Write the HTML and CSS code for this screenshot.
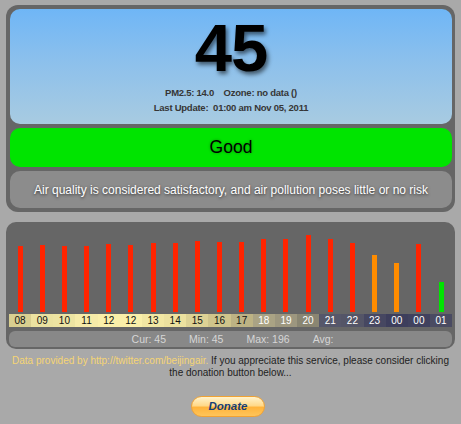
FILE: index.html
```html
<!DOCTYPE html>
<html>
<head>
<meta charset="utf-8">
<link rel="stylesheet" href="styles.css">
</head>
<body>
<div class="page">
  <div class="panel top">
    <div class="sky">
      <div class="aqi">45</div>
      <div class="info">PM2.5: 14.0&nbsp;&nbsp;&nbsp;&nbsp;Ozone: no data ()</div>
      <div class="info">Last Update:&nbsp; 01:00 am Nov 05, 2011</div>
    </div>
    <div class="level">Good</div>
    <div class="desc">Air quality is considered satisfactory, and air pollution poses little or no risk</div>
  </div>

  <div class="panel chart">
    <div class="bars">
      <div class="col"><span class="bar red" style="height:66px"></span></div>
      <div class="col"><span class="bar red" style="height:67px"></span></div>
      <div class="col"><span class="bar red" style="height:66px"></span></div>
      <div class="col"><span class="bar red" style="height:66px"></span></div>
      <div class="col"><span class="bar red" style="height:68px"></span></div>
      <div class="col"><span class="bar red" style="height:67px"></span></div>
      <div class="col"><span class="bar red" style="height:69px"></span></div>
      <div class="col"><span class="bar red" style="height:69px"></span></div>
      <div class="col"><span class="bar red" style="height:71px"></span></div>
      <div class="col"><span class="bar red" style="height:70px"></span></div>
      <div class="col"><span class="bar red" style="height:70px"></span></div>
      <div class="col"><span class="bar red" style="height:73px"></span></div>
      <div class="col"><span class="bar red" style="height:73px"></span></div>
      <div class="col"><span class="bar red" style="height:77px"></span></div>
      <div class="col"><span class="bar red" style="height:73px"></span></div>
      <div class="col"><span class="bar red" style="height:69px"></span></div>
      <div class="col"><span class="bar orange" style="height:57px"></span></div>
      <div class="col"><span class="bar orange" style="height:49px"></span></div>
      <div class="col"><span class="bar red" style="height:68px"></span></div>
      <div class="col"><span class="bar green" style="height:30px"></span></div>
    </div>
    <div class="labels">
      <span class="lab" style="background:#d9cf90">08</span>
      <span class="lab" style="background:#ebe2a0">09</span>
      <span class="lab" style="background:#ede4a2">10</span>
      <span class="lab" style="background:#f6eba8">11</span>
      <span class="lab" style="background:#faefa9">12</span>
      <span class="lab" style="background:#faefa9">12</span>
      <span class="lab" style="background:#f2e7a3">13</span>
      <span class="lab" style="background:#ece19f">14</span>
      <span class="lab" style="background:#ddd295">15</span>
      <span class="lab" style="background:#cfc48b">16</span>
      <span class="lab" style="background:#bdb384">17</span>
      <span class="lab light" style="background:#aaa384">18</span>
      <span class="lab light" style="background:#9d977f">19</span>
      <span class="lab light" style="background:#8a8672">20</span>
      <span class="lab light" style="background:#56576a">21</span>
      <span class="lab light" style="background:#545567">22</span>
      <span class="lab light" style="background:#464761">23</span>
      <span class="lab light" style="background:#3d3e5c">00</span>
      <span class="lab light" style="background:#40415e">00</span>
      <span class="lab light" style="background:#4a4b62">01</span>
    </div>
    <div class="stats">
      <span>Cur: 45</span>
      <span>Min: 45</span>
      <span>Max: 196</span>
      <span>Avg: </span>
    </div>
  </div>

  <div class="note">
    <div class="line"><span class="src">Data provided by http://twitter.com/beijingair.</span> If you appreciate this service, please consider clicking</div>
    <div class="line">the donation button below...</div>
  </div>

  <div class="donate-wrap">
    <span class="donate">Donate</span>
  </div>
</div>
</body>
</html>
```
FILE: styles.css
```css
html, body {
  margin: 0;
  padding: 0;
  background: #a9a9a9;
  font-family: "Liberation Sans", Arial, Helvetica, sans-serif;
}

.page {
  width: 449px;
  padding: 5px 0 0 6px;
}

.panel {
  background: #666666;
  border-radius: 12px;
  padding: 4px 3px 4px 4px;
  display: flex;
  flex-direction: column;
}

.top {
  gap: 4px;
}

.sky {
  height: 115px;
  box-sizing: border-box;
  border-radius: 10px;
  background: linear-gradient(to bottom, #6fb6f6 0%, #8cc0ec 45%, #a8cbe1 100%);
  text-align: center;
  padding-top: 6px;
}

.aqi {
  font-size: 67px;
  font-weight: bold;
  line-height: 66px;
  height: 66px;
  color: #000;
  letter-spacing: -1px;
  text-shadow: 2px 3px 4px rgba(0, 0, 0, 0.55);
}

.info {
  font-size: 9.5px;
  font-weight: bold;
  letter-spacing: -0.25px;
  color: #363636;
  line-height: 15px;
}

.aqi + .info {
  margin-top: 4px;
}

.level {
  height: 39px;
  border-radius: 10px;
  background: #00e400;
  color: #000;
  font-size: 17.5px;
  display: flex;
  align-items: center;
  justify-content: center;
  text-shadow: 0 0 3px rgba(0, 0, 0, 0.35);
}

.desc {
  height: 37px;
  border-radius: 10px;
  background: #8c8c8c;
  color: #fff;
  font-size: 12px;
  display: flex;
  align-items: center;
  justify-content: center;
  text-shadow: 0 1px 3px rgba(0, 0, 0, 0.7);
}

.chart {
  margin-top: 10px;
  padding: 3px 3px 2px 3px;
  border-radius: 10px;
}

.bars {
  height: 87px;
  display: flex;
  align-items: flex-end;
}

.col {
  flex: 1;
  display: flex;
  justify-content: center;
  align-items: flex-end;
}

.bar {
  display: block;
  width: 5px;
}

.red { background: #ff2400; }
.orange { background: #ff8c00; }
.green { background: #00e400; }

.labels {
  margin-top: 2px;
  height: 13px;
  display: flex;
}

.lab {
  flex: 1;
  font-size: 10px;
  line-height: 13px;
  text-align: center;
  color: #111;
}

.lab.light {
  color: #fff;
}

.stats {
  margin-top: 4px;
  height: 16px;
  border-radius: 6px;
  background: #888888;
  display: flex;
  justify-content: center;
  align-items: center;
  gap: 23px;
  color: #d6d6d6;
  font-size: 10.5px;
  padding-left: 4px;
}

.note {
  margin-top: 6px;
  font-size: 10px;
  line-height: 12.3px;
  text-align: center;
  color: #1e1e1e;
  white-space: nowrap;
}

.src {
  color: #f6d574;
}

.donate-wrap {
  display: flex;
  justify-content: center;
  margin-top: 16px;
  padding-right: 5px;
}

.donate {
  width: 74px;
  height: 21px;
  box-sizing: border-box;
  border: 1px solid #f1a232;
  border-radius: 11px;
  background: linear-gradient(to bottom, #fff3cc 0%, #ffd98a 45%, #ffb43c 55%, #ffc55a 100%);
  color: #163e74;
  font-size: 11.5px;
  font-weight: bold;
  font-style: italic;
  display: flex;
  align-items: center;
  justify-content: center;
}
```
